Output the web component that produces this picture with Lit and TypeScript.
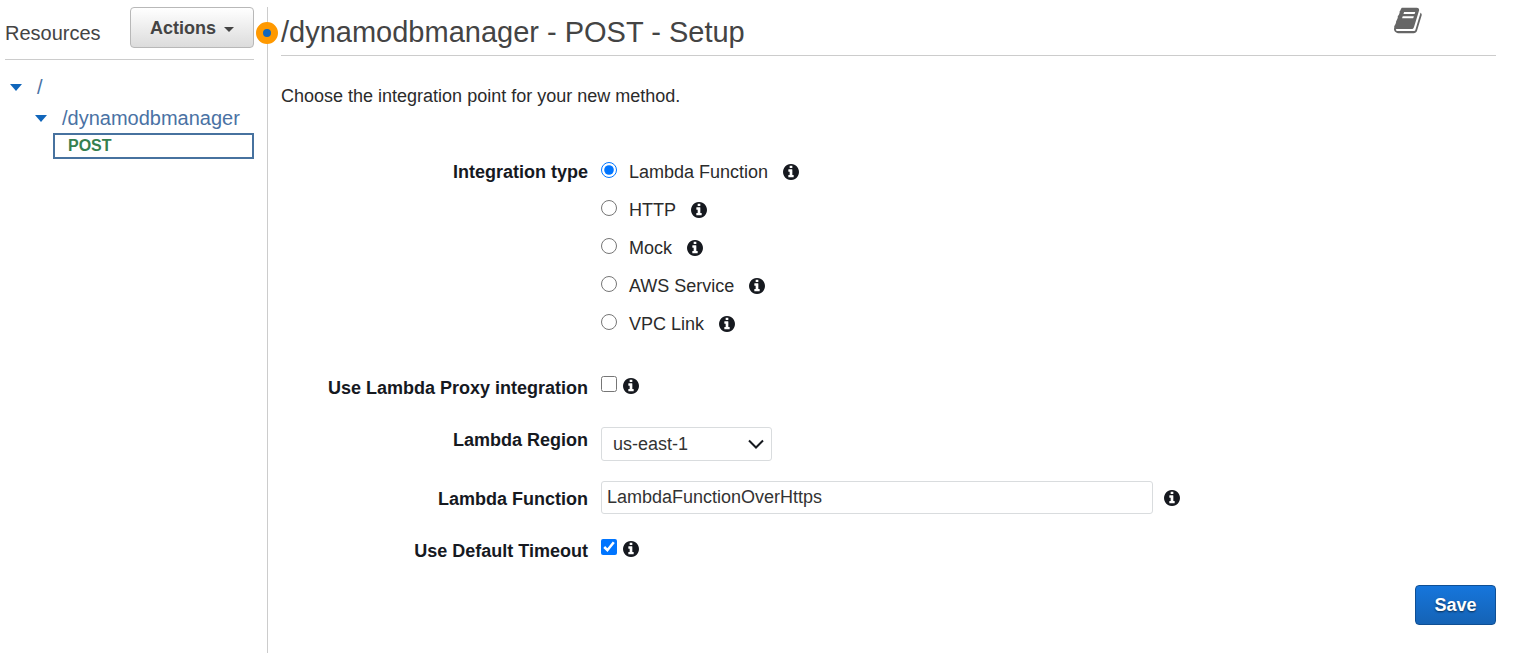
import { LitElement, html, css, svg } from "lit";
import { customElement, state } from "lit/decorators.js";

const infoPath =
  "M1152 1376v-160q0-14-9-23t-23-9h-96v-512q0-14-9-23t-23-9h-320q-14 0-23 9t-9 23v160q0 14 9 23t23 9h96v320h-96q-14 0-23 9t-9 23v160q0 14 9 23t23 9h448q14 0 23-9t9-23zM1024 480v-160q0-14-9-23t-23-9h-192q-14 0-23 9t-9 23v160q0 14 9 23t23 9h192q14 0 23-9t9-23zM1664 896q0 209-103 385.5t-279.5 279.5-385.5 103-385.5-103-279.5-279.5-103-385.5 103-385.5 279.5-279.5 385.5-103 385.5 103 279.5 279.5 103 385.5z";

const bookPath =
  "M1639 478q40 57 18 129l-275 906q-19 64-76.5 107.5t-122.5 43.5h-923q-77 0-148.5-53.5t-99.5-131.5q-24-67-2-127 0-4 3-27t4-37q1-8-3-21.5t-3-19.5q2-11 8-21t16.5-23.5 16.5-23.5q23-38 45-91.5t30-91.5q3-10 .5-30t-.5-28q3-11 17-28t17-23q21-36 42-92t25-90q1-9-2.5-32t.5-28q4-13 22-30.5t22-22.5q19-26 42.5-84.5t27.5-96.5q1-8-3-25.5t-2-26.5q2-8 9-18t18-23 17-21q8-12 16.5-30.5t15-35 16-36 19.5-32 26.5-23.5 36-11.5 47.5 5.5l-1 3q38-9 51-9h761q74 0 114 56t18 130l-274 906q-36 119-71.5 153.5t-128.5 34.5h-869q-27 0-38 15-11 16-1 43 24 70 144 70h923q29 0 56-15.5t35-41.5l300-987q7-22 5-57 38 15 59 43zm-1064 2q-4 13 2 22.5t20 9.5h608q13 0 25.5-9.5t16.5-22.5l21-64q4-13-2-22.5t-20-9.5h-608q-13 0-25.5 9.5t-16.5 22.5zm-83 256q-4 13 2 22.5t20 9.5h608q13 0 25.5-9.5t16.5-22.5l21-64q4-13-2-22.5t-20-9.5h-608q-13 0-25.5 9.5t-16.5 22.5z";

@customElement("info-icon")
export class InfoIcon extends LitElement {
  static styles = css`
    :host {
      display: block;
      flex: none;
      width: 16px;
      height: 16px;
      color: #16191f;
    }
    .glyph {
      display: block;
      width: 100%;
      height: 100%;
      fill: currentColor;
    }
  `;

  render() {
    return html`<svg class="glyph" viewBox="128 128 1536 1536" aria-hidden="true">
      ${svg`<path fill-rule="evenodd" d=${infoPath}></path>`}
    </svg>`;
  }
}

@customElement("resource-tree")
export class ResourceTree extends LitElement {
  static styles = css`
    :host {
      display: block;
      padding-left: 5px;
      font-size: 20px;
      line-height: 24px;
    }
    .list {
      list-style: none;
      margin: 0;
      padding: 0;
    }
    .nested {
      padding-left: 25px;
      padding-top: 7px;
    }
    .methods {
      padding-left: 18px;
      padding-top: 3px;
    }
    .node {
      display: flex;
      align-items: center;
      gap: 15px;
    }
    .caret {
      width: 12px;
      height: 7px;
      fill: #1166bb;
    }
    .path {
      color: #4a72a4;
      text-decoration: none;
    }
    .method {
      display: block;
      border: 2px solid #47729f;
      padding: 0 13px;
      font-size: 16px;
      line-height: 22px;
      font-weight: bold;
      color: #35804f;
      text-decoration: none;
    }
  `;

  private caret() {
    return html`<svg class="caret" viewBox="0 0 12 7" aria-hidden="true">
      <path d="M0 0h12L6 7z"></path>
    </svg>`;
  }

  render() {
    return html`
      <ul class="list">
        <li>
          <div class="node">${this.caret()}<a class="path" href="#root">/</a></div>
          <ul class="list nested">
            <li>
              <div class="node">
                ${this.caret()}<a class="path" href="#dynamodbmanager">/dynamodbmanager</a>
              </div>
              <ul class="list methods">
                <li><a class="method" href="#post">POST</a></li>
              </ul>
            </li>
          </ul>
        </li>
      </ul>
    `;
  }
}

@customElement("app-root")
export class AppRoot extends LitElement {
  static styles = css`
    :host {
      display: flex;
      box-sizing: border-box;
      min-height: 100vh;
      padding-top: 7px;
      background: #fff;
      color: #16191f;
      font-family: "Liberation Sans", Arial, sans-serif;
      font-size: 18px;
      line-height: 22px;
    }
    * {
      box-sizing: border-box;
    }
    .sidebar {
      position: relative;
      flex: none;
      width: 268px;
      padding: 0 13px 0 5px;
      border-right: 1px solid #ccc;
    }
    .side-head {
      display: flex;
      justify-content: space-between;
      align-items: center;
      padding-bottom: 11px;
      margin-bottom: 15px;
      border-bottom: 1px solid #ccc;
    }
    .side-title {
      margin: 0;
      padding-top: 10px;
      font-size: 20px;
      font-weight: normal;
      color: #444;
    }
    .actions {
      display: flex;
      align-items: center;
      justify-content: center;
      gap: 8px;
      width: 124px;
      height: 41px;
      padding: 2px 0 0;
      border: 1px solid #b8b8b8;
      border-radius: 4px;
      background: linear-gradient(#fff, #dcdcdc);
      font: bold 18px "Liberation Sans", Arial, sans-serif;
      color: #444;
    }
    .actions-caret {
      width: 10px;
      height: 5px;
      margin-top: 2px;
      fill: #444;
    }
    .handle {
      position: absolute;
      top: 15px;
      right: -11px;
      width: 22px;
      height: 22px;
      padding: 0;
      border: 7px solid #ff9900;
      border-radius: 50%;
      background: #1166bb;
    }
    .main {
      flex: 1;
      min-width: 0;
      padding: 0 42px 28px 13px;
    }
    .head {
      display: flex;
      justify-content: space-between;
      align-items: flex-start;
      border-bottom: 1px solid #ccc;
      padding-bottom: 5px;
    }
    .title {
      margin: 0;
      padding-top: 7px;
      font-size: 29px;
      line-height: 36px;
      font-weight: normal;
      color: #444;
    }
    .docs {
      margin-right: 74px;
    }
    .book {
      display: block;
      width: 28px;
      height: 27px;
      fill: #666;
    }
    .intro {
      margin: 29px 0 54px;
      color: #2b2b2b;
    }
    .row {
      display: grid;
      grid-template-columns: 307px minmax(0, 1fr);
      column-gap: 13px;
      align-items: start;
    }
    .name {
      text-align: right;
      font-weight: bold;
    }
    .options {
      display: grid;
      gap: 16px;
      margin: 0 0 42px;
    }
    .option,
    .tick {
      display: flex;
      align-items: center;
    }
    .option label {
      padding: 0 15px 0 12px;
      color: #2b2b2b;
    }
    .radio,
    .check {
      flex: none;
      width: 16px;
      height: 16px;
      margin: 0 0 5px;
    }
    .tick {
      gap: 6px;
      height: 18px;
    }
    .proxy {
      margin-bottom: 28px;
    }
    .region {
      margin-bottom: 20px;
    }
    .region .name {
      padding-top: 2px;
    }
    .select-wrap {
      display: grid;
      width: 171px;
      align-items: center;
    }
    .select {
      grid-area: 1 / 1;
      appearance: none;
      width: 100%;
      height: 34px;
      padding: 0 11px;
      border: 1px solid #d9dcde;
      border-radius: 3px;
      background: #fff;
      font: 18px "Liberation Sans", Arial, sans-serif;
      color: #333;
    }
    .chevron {
      grid-area: 1 / 1;
      justify-self: end;
      width: 16px;
      height: 10px;
      margin-right: 8px;
      fill: none;
      stroke: #16191f;
      stroke-width: 2;
      pointer-events: none;
    }
    .function {
      margin-bottom: 26px;
    }
    .function .name {
      padding-top: 7px;
    }
    .field {
      display: flex;
      align-items: center;
      gap: 11px;
    }
    .text {
      width: 552px;
      min-width: 0;
      height: 33px;
      padding: 0 5px;
      border: 1px solid #d9dcde;
      border-radius: 3px;
      font: 18px "Liberation Sans", Arial, sans-serif;
      color: #333;
    }
    .foot {
      display: flex;
      justify-content: flex-end;
      margin-top: 23px;
    }
    .save {
      width: 81px;
      height: 40px;
      padding: 0;
      border: 1px solid #0f4f94;
      border-radius: 4px;
      background: linear-gradient(#1676dc, #1563b5);
      font: bold 18px "Liberation Sans", Arial, sans-serif;
      color: #fff;
      text-shadow: 0 1px 2px rgba(0, 0, 0, 0.6);
    }
  `;

  @state() private integration = "Lambda Function";

  private types = ["Lambda Function", "HTTP", "Mock", "AWS Service", "VPC Link"];

  render() {
    return html`
      <aside class="sidebar">
        <div class="side-head">
          <h2 class="side-title">Resources</h2>
          <button class="actions" type="button">
            Actions
            <svg class="actions-caret" viewBox="0 0 10 5" aria-hidden="true">
              <path d="M0 0h10L5 5z"></path>
            </svg>
          </button>
        </div>
        <resource-tree></resource-tree>
        <button class="handle" type="button" aria-label="Resize panel"></button>
      </aside>
      <main class="main">
        <header class="head">
          <h1 class="title">/dynamodbmanager - POST - Setup</h1>
          <a class="docs" href="#docs" aria-label="Documentation">
            <svg class="book" viewBox="0 90 1680 1620" aria-hidden="true">
              <path d=${bookPath}></path>
            </svg>
          </a>
        </header>
        <p class="intro">Choose the integration point for your new method.</p>
        <form @submit=${(e: Event) => e.preventDefault()}>
          <div class="row" role="radiogroup" aria-labelledby="type-name">
            <span class="name" id="type-name">Integration type</span>
            <div class="options">
              ${this.types.map(
                (type, i) => html`
                  <div class="option">
                    <input
                      class="radio"
                      type="radio"
                      name="integration"
                      id="type-${i}"
                      .checked=${this.integration === type}
                      @change=${() => (this.integration = type)}
                    />
                    <label for="type-${i}">${type}</label>
                    <info-icon></info-icon>
                  </div>
                `
              )}
            </div>
          </div>
          <div class="row proxy">
            <label class="name" for="proxy">Use Lambda Proxy integration</label>
            <div class="tick">
              <input class="check" type="checkbox" id="proxy" />
              <info-icon></info-icon>
            </div>
          </div>
          <div class="row region">
            <label class="name" for="region">Lambda Region</label>
            <div class="select-wrap">
              <select class="select" id="region">
                <option>us-east-1</option>
              </select>
              <svg class="chevron" viewBox="0 0 16 10" aria-hidden="true">
                <path d="M1 1.5l7 7 7-7"></path>
              </svg>
            </div>
          </div>
          <div class="row function">
            <label class="name" for="function">Lambda Function</label>
            <div class="field">
              <input class="text" type="text" id="function" value="LambdaFunctionOverHttps" />
              <info-icon></info-icon>
            </div>
          </div>
          <div class="row">
            <label class="name" for="timeout">Use Default Timeout</label>
            <div class="tick">
              <input class="check" type="checkbox" id="timeout" checked />
              <info-icon></info-icon>
            </div>
          </div>
          <div class="foot">
            <button class="save" type="submit">Save</button>
          </div>
        </form>
      </main>
    `;
  }
}
